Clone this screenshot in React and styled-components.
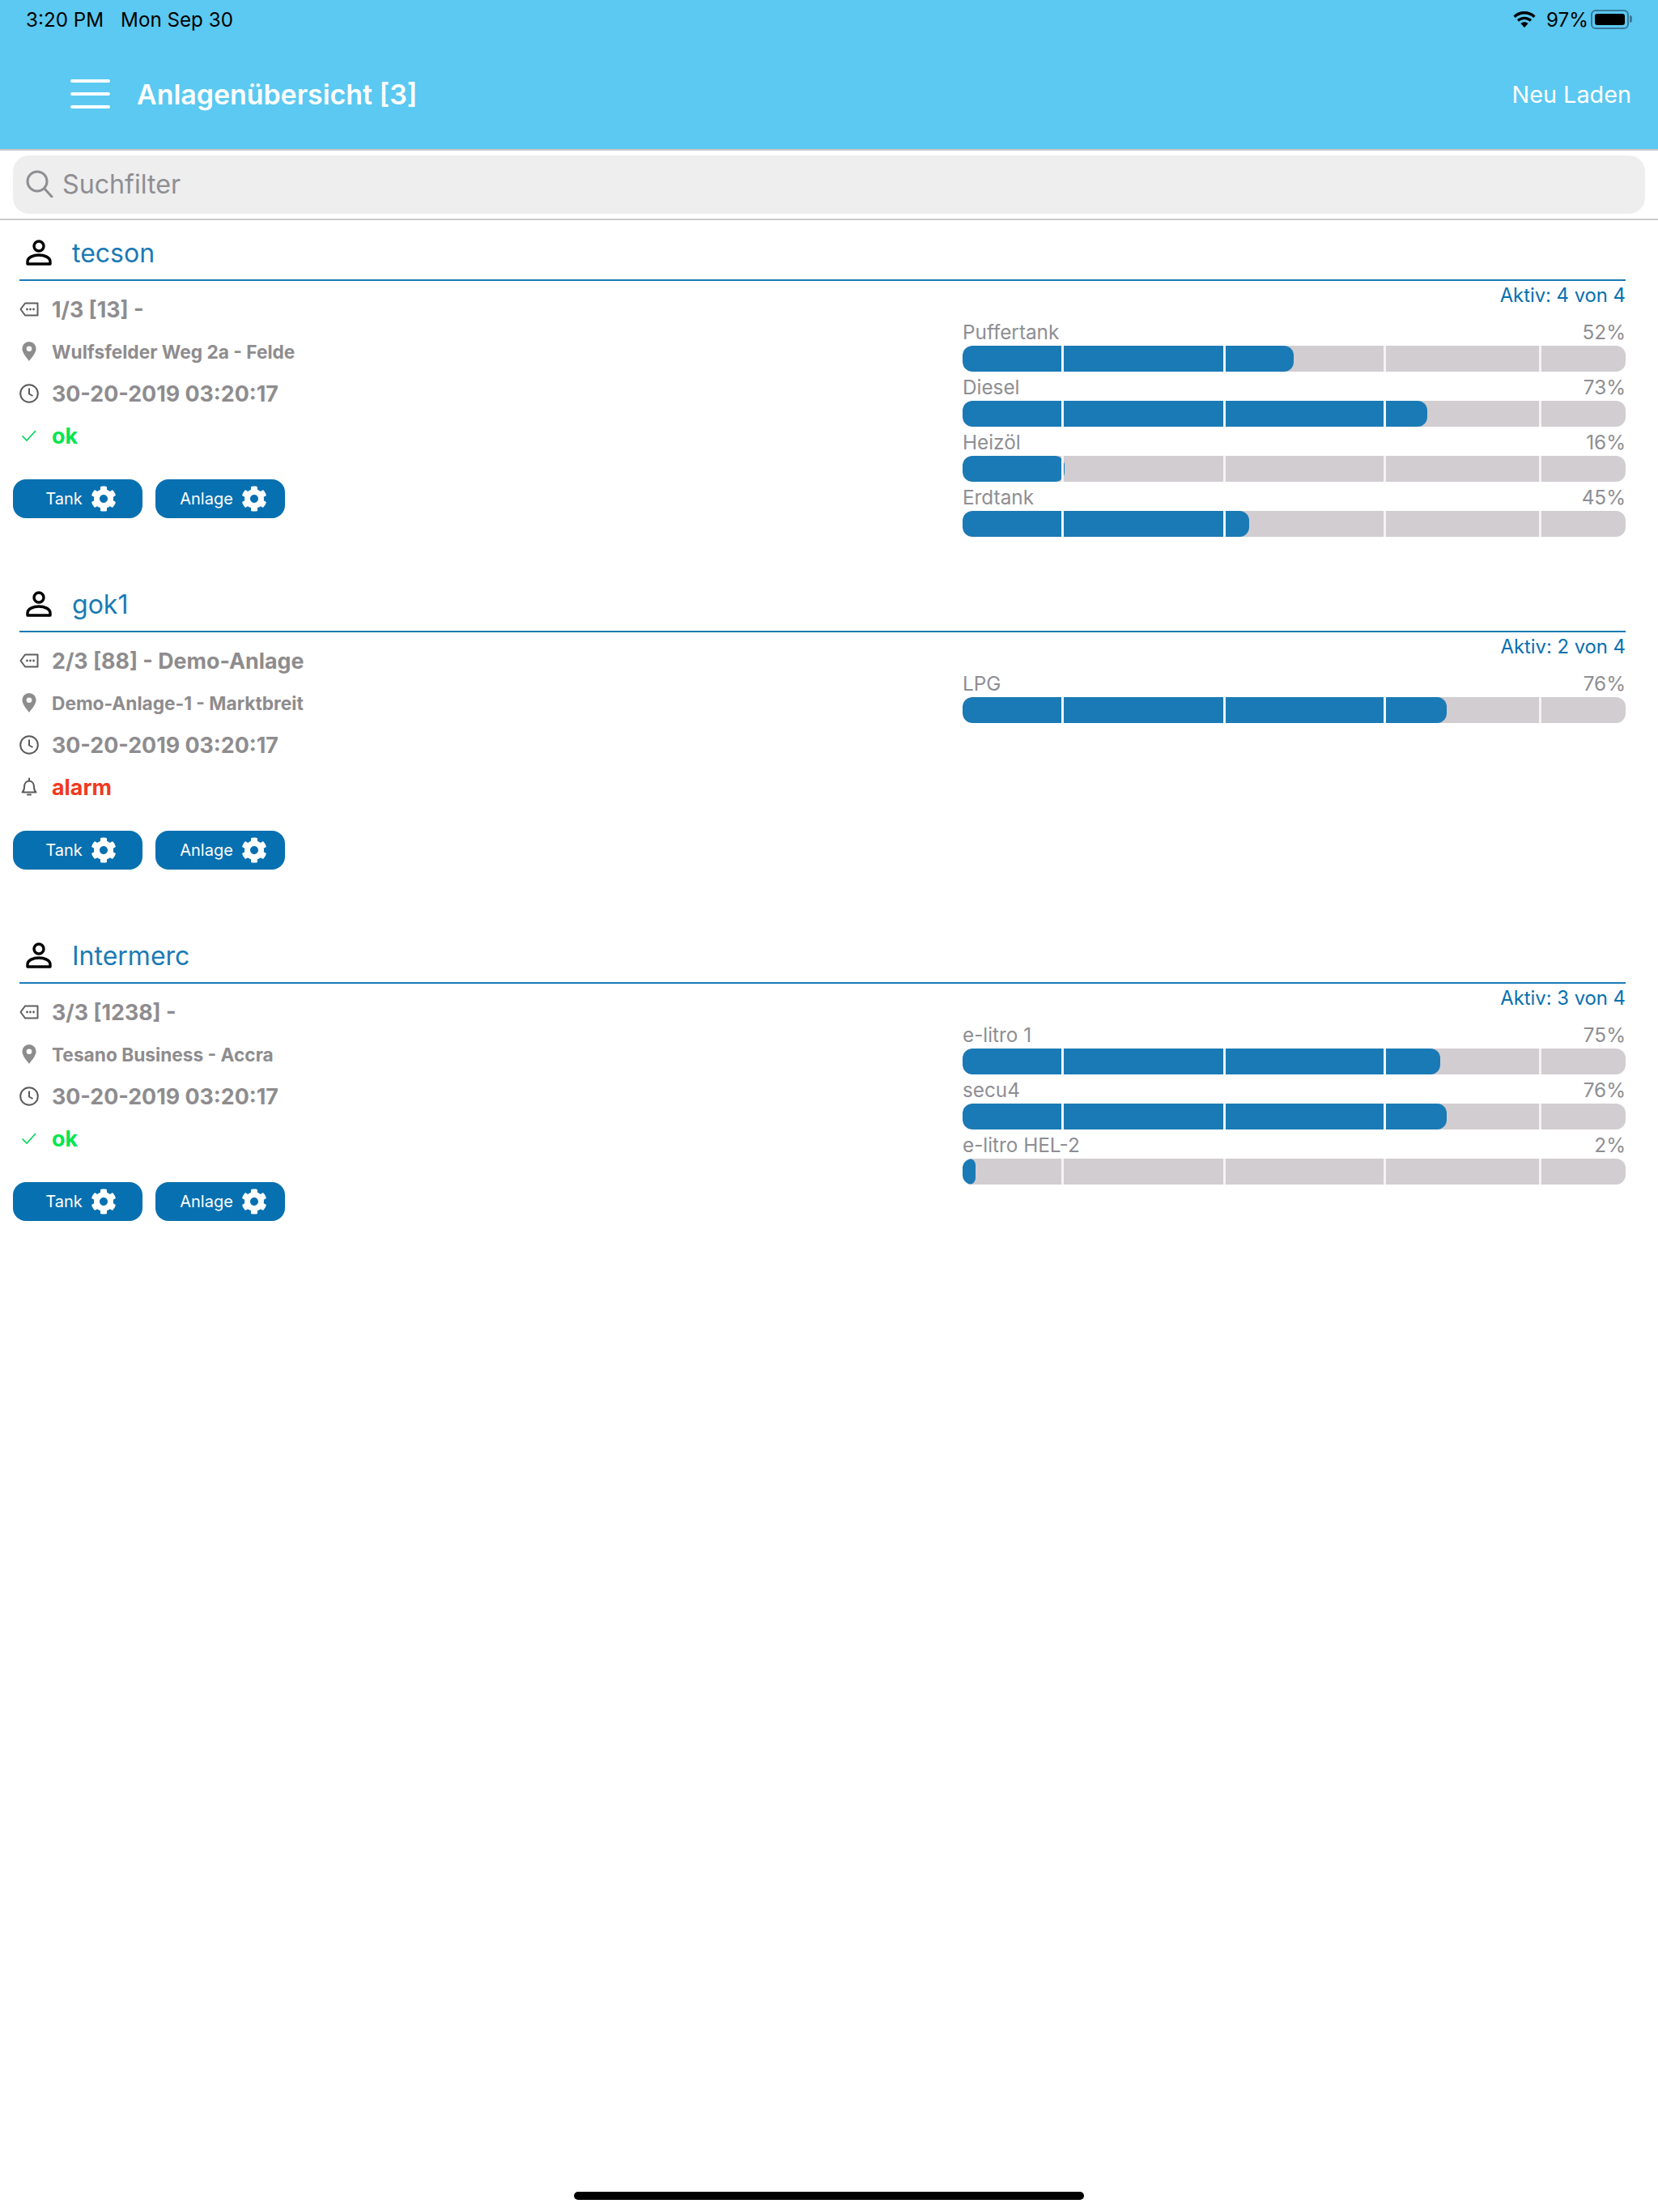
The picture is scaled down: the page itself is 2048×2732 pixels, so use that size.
import React from 'react';
import styled, {createGlobalStyle} from 'styled-components';
import {FaCog} from 'react-icons/fa';

const GlobalStyle = createGlobalStyle`
  body {
    margin: 0;
    background: #fff;
    font-family: Inter, "Noto Sans", "Liberation Sans", sans-serif;
  }
`;

const Page = styled.div`
  display: flex;
  flex-direction: column;
  width: 2048px;
  height: 2732px;
  overflow: hidden;
`;

const Header = styled.header`
  height: 184px;
  background: #5bc9f1;
  border-bottom: 2px solid #c6c6c8;
  box-sizing: content-box;
  flex: none;
`;

const StatusBar = styled.div`
  display: flex;
  align-items: center;
  justify-content: space-between;
  height: 48px;
  padding: 0 31px 0 32px;
  font-size: 24.2px;
  color: #000;
`;

const StatusLeft = styled.div`
  display: flex;
  gap: 21px;
`;

const StatusRight = styled.div`
  display: flex;
  align-items: center;
  gap: 3px;

  svg {
    margin-right: 10px;
  }
`;

const Battery = styled.div`
  position: relative;
  box-sizing: border-box;
  width: 47px;
  height: 24px;
  padding: 3px;
  border: 2px solid #39799b;
  border-radius: 6px;
  margin-right: 5px;

  &::before {
    content: '';
    display: block;
    height: 100%;
    background: #000;
    border-radius: 3px;
  }

  &::after {
    content: '';
    position: absolute;
    right: -6px;
    top: 5px;
    width: 3px;
    height: 9px;
    background: #39799b;
    border-radius: 0 3px 3px 0;
  }
`;

const NavBar = styled.div`
  display: flex;
  align-items: center;
  height: 136px;
  padding: 0 33px 0 87px;
  box-sizing: border-box;
  color: #fff;
`;

const Hamburger = styled.div`
  display: flex;
  flex-direction: column;
  gap: 12px;
  width: 49px;
  margin-right: 33px;

  span {
    display: block;
    height: 4px;
    background: #fff;
    border-radius: 2px;
  }
`;

const Title = styled.h1`
  flex: 1;
  margin: 0;
  font-size: 33.9px;
  font-weight: 600;
`;

const Reload = styled.div`
  font-size: 28.8px;
`;

const SearchWrap = styled.div`
  flex: none;
  padding: 6px 16px 6px;
  border-bottom: 2px solid #cbcbcb;
`;

const SearchBar = styled.div`
  display: flex;
  align-items: center;
  gap: 11px;
  height: 72px;
  padding-left: 16px;
  padding-bottom: 2px;
  box-sizing: border-box;
  background: #eeeeee;
  border-radius: 20px;
  color: #8e8e93;
  font-size: 32.2px;
`;

const Card = styled.section`
  flex: none;
  box-sizing: border-box;
  height: 434px;
  padding: 8px 40px 0 16px;
`;

const CardHead = styled.div`
  display: flex;
  align-items: center;
  gap: 25px;
  box-sizing: border-box;
  height: 67px;
  margin-left: 8px;
  padding: 0 0 1px 8px;
  border-bottom: 2px solid #1a7ab5;
  color: #1a7ab5;
  font-size: 32px;
`;

const CardBody = styled.div`
  display: grid;
  grid-template-columns: 1fr 819px;
`;

const Info = styled.div`
  padding-top: 9px;
`;

const InfoRow = styled.div`
  display: flex;
  align-items: center;
  gap: 16px;
  height: 52px;
  padding-left: 8px;
  font-weight: 700;
  font-size: ${p => (p.$small ? '22.7px' : '26.8px')};
  color: ${p => p.$color || '#8e8c8e'};
`;

const IconBox = styled.span`
  display: flex;
  align-items: center;
  justify-content: center;
  width: 24px;
  flex: none;
`;

const Buttons = styled.div`
  display: flex;
  gap: 16px;
  margin-top: 28px;
`;

const Button = styled.button`
  display: flex;
  align-items: center;
  justify-content: center;
  gap: 10px;
  box-sizing: border-box;
  width: 160px;
  height: 48px;
  padding: 0 0 0 8px;
  border: 0;
  border-radius: 16px;
  background: #0770b0;
  color: #fff;
  font-family: inherit;
  font-size: 20px;
`;

const Tanks = styled.div`
  display: flex;
  flex-direction: column;
`;

const Active = styled.div`
  height: 44px;
  line-height: 36px;
  text-align: right;
  font-size: 23.8px;
  color: #0770b0;
`;

const TankItem = styled.div`
  height: 68px;
`;

const TankLabel = styled.div`
  display: flex;
  justify-content: space-between;
  align-items: center;
  height: 36px;
  padding-top: 1px;
  box-sizing: border-box;
  font-size: 24.3px;
  color: #8e8e93;
`;

const Track = styled.div`
  position: relative;
  height: 32px;
  background: #d1cdd1;
  border-radius: 12px;
  overflow: hidden;
`;

const Fill = styled.div`
  height: 100%;
  background: #1a7ab5;
  border-radius: 12px;
`;

const Tick = styled.span`
  position: absolute;
  top: 0;
  bottom: 0;
  left: ${p => p.$left}px;
  width: 3px;
  background: #f4f4f4;
`;

const HomeBar = styled.div`
  flex: none;
  width: 630px;
  height: 10px;
  margin: auto auto 15px;
  background: #000;
  border-radius: 5px;
`;

const PersonIcon = () => (
  <svg width="32" height="32" viewBox="0 0 32 32" fill="none" stroke="#000" strokeWidth="3.4">
    <circle cx="16" cy="8" r="6" />
    <path d="M2 30v-3c0-5 7-8 14-8s14 3 14 8v3z" strokeLinejoin="round" />
  </svg>
);

const TagIcon = () => (
  <svg width="24" height="18" viewBox="0 0 24 18" fill="none" stroke="#5f5f5f" strokeWidth="2">
    <path d="M7 1.5h15.5v15H7L1.5 9z" strokeLinejoin="round" />
    <g fill="#5f5f5f" stroke="none">
      <circle cx="9.5" cy="9" r="1.4" />
      <circle cx="13.5" cy="9" r="1.4" />
      <circle cx="17.5" cy="9" r="1.4" />
    </g>
  </svg>
);

const PinIcon = () => (
  <svg width="18" height="24" viewBox="0 0 18 24">
    <path fillRule="evenodd" fill="#8e8c8e" d="M9 0a8.6 8.6 0 0 1 8.6 8.6C17.6 14 12 20 9 24 6 20 .4 14 .4 8.6A8.6 8.6 0 0 1 9 0zm0 5.4a3.3 3.3 0 1 0 0 6.6 3.3 3.3 0 0 0 0-6.6z" />
  </svg>
);

const ClockIcon = () => (
  <svg width="24" height="24" viewBox="0 0 24 24" fill="none" stroke="#5a5a5a" strokeWidth="2">
    <circle cx="12" cy="12" r="10.8" />
    <path d="M12 5.5V12.5l4.5 2.5" />
  </svg>
);

const CheckIcon = () => (
  <svg width="20" height="16" viewBox="0 0 20 16" fill="none" stroke="#00d85a" strokeWidth="1.7">
    <path d="M1.5 8.5l5.5 5.5L18 2" />
  </svg>
);

const BellIcon = () => (
  <svg width="20" height="24" viewBox="0 0 20 24" fill="none" stroke="#5a5a5a" strokeWidth="2">
    <path d="M1.5 18.5h17c-2-1.5-2.5-3-2.500-6.500 0-4-2-7.500-6-7.500S4 8 4 12c0 3.500-.5 5-2.500 6.500z" strokeLinejoin="round" />
    <path d="M10 1.5v3M8 21.5h4" strokeLinecap="round" />
  </svg>
);

const SearchIcon = () => (
  <svg width="34" height="34" viewBox="0 0 34 34" fill="none" stroke="#8e8e93" strokeWidth="3">
    <circle cx="14" cy="14" r="12" />
    <path d="M23 23l9 10" strokeLinecap="round" />
  </svg>
);

const WifiIcon = () => (
  <svg width="28" height="20" viewBox="0 0 28 20">
    <path fill="#000" d="M14 0c5.3 0 10 2 13.6 5.4l-2.3 2.5A16.5 16.5 0 0 0 14 3.4 16.5 16.5 0 0 0 2.7 7.9L.4 5.400A19.700 19.700 0 0 1 14 0zm0 6.700c3.500 0 6.700 1.300 9.100 3.500l-2.300 2.500A10.200 10.200 0 0 0 14 10c-2.600 0-5 1-6.800 2.700l-2.300-2.500A13.400 13.400 0 0 1 14 6.700zm0 6.600c1.700 0 3.300.6 4.600 1.700L14 20l-4.600-5c1.300-1.100 2.900-1.700 4.600-1.700z" />
  </svg>
);

const statusIcons = {ok: <CheckIcon />, alarm: <BellIcon />};
const statusColors = {ok: '#00e64d', alarm: '#f2391e'};
const ticks = [122, 322, 520, 712];

const plants = [
  {
    name: 'tecson',
    title: '1/3 [13] -',
    address: 'Wulfsfelder Weg 2a - Felde',
    status: 'ok',
    active: 'Aktiv: 4 von 4',
    tanks: [
      {name: 'Puffertank', level: 52},
      {name: 'Diesel', level: 73},
      {name: 'Heizöl', level: 16},
      {name: 'Erdtank', level: 45},
    ],
  },
  {
    name: 'gok1',
    title: '2/3 [88] - Demo-Anlage',
    address: 'Demo-Anlage-1 - Marktbreit',
    status: 'alarm',
    active: 'Aktiv: 2 von 4',
    tanks: [{name: 'LPG', level: 76}],
  },
  {
    name: 'Intermerc',
    title: '3/3 [1238] -',
    address: 'Tesano Business - Accra',
    status: 'ok',
    active: 'Aktiv: 3 von 4',
    tanks: [
      {name: 'e-litro 1', level: 75},
      {name: 'secu4', level: 76},
      {name: 'e-litro HEL-2', level: 2},
    ],
  },
];

function Plant({plant}) {
  return (
    <Card>
      <CardHead>
        <PersonIcon />
        {plant.name}
      </CardHead>
      <CardBody>
        <Info>
          <InfoRow><IconBox><TagIcon /></IconBox>{plant.title}</InfoRow>
          <InfoRow $small><IconBox><PinIcon /></IconBox>{plant.address}</InfoRow>
          <InfoRow><IconBox><ClockIcon /></IconBox>30-20-2019 03:20:17</InfoRow>
          <InfoRow $color={statusColors[plant.status]}>
            <IconBox>{statusIcons[plant.status]}</IconBox>
            {plant.status}
          </InfoRow>
          <Buttons>
            <Button>Tank <FaCog size={32} /></Button>
            <Button>Anlage <FaCog size={32} /></Button>
          </Buttons>
        </Info>
        <Tanks>
          <Active>{plant.active}</Active>
          {plant.tanks.map(tank => (
            <TankItem key={tank.name}>
              <TankLabel>
                <span>{tank.name}</span>
                <span>{tank.level}%</span>
              </TankLabel>
              <Track>
                <Fill style={{width: `${tank.level * 0.96}%`}} />
                {ticks.map(left => <Tick key={left} $left={left} />)}
              </Track>
            </TankItem>
          ))}
        </Tanks>
      </CardBody>
    </Card>
  );
}

function App() {
  return (
    <Page>
      <GlobalStyle />
      <Header>
        <StatusBar>
          <StatusLeft>
            <span>3:20 PM</span>
            <span>Mon Sep 30</span>
          </StatusLeft>
          <StatusRight>
            <WifiIcon />
            <span>97%</span>
            <Battery />
          </StatusRight>
        </StatusBar>
        <NavBar>
          <Hamburger><span /><span /><span /></Hamburger>
          <Title>Anlagenübersicht [3]</Title>
          <Reload>Neu Laden</Reload>
        </NavBar>
      </Header>
      <SearchWrap>
        <SearchBar>
          <SearchIcon />
          Suchfilter
        </SearchBar>
      </SearchWrap>
      {plants.map(plant => <Plant key={plant.name} plant={plant} />)}
      <HomeBar />
    </Page>
  );
}

export default App;
